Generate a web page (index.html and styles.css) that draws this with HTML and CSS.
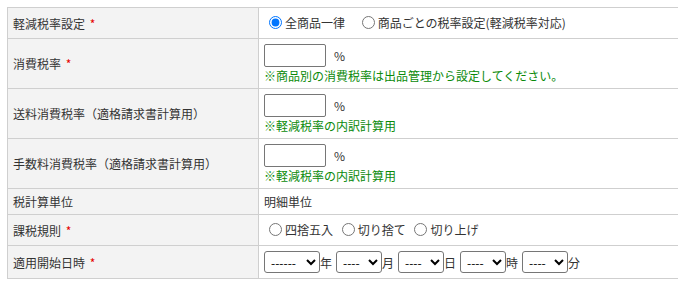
FILE: index.html
```html
<!doctype html>
<html lang="ja">
<head>
  <meta charset="UTF-8">
  <meta name="viewport" content="width=device-width, initial-scale=1.0">
  <title>税率設定</title>
  <link rel="stylesheet" href="styles.css">
</head>
<body>
  <div class="wrap">
    <table class="form-table">
      <tr class="row-short">
        <th>軽減税率設定 <span class="req">*</span></th>
        <td>
          <label class="opt opt-wide"><input type="radio" name="mode" checked>全商品一律</label>
          <label class="opt"><input type="radio" name="mode">商品ごとの税率設定(軽減税率対応)</label>
        </td>
      </tr>
      <tr class="row-rate">
        <th>消費税率 <span class="req">*</span></th>
        <td>
          <div><input type="text" class="num"><span class="unit">%</span></div>
          <div class="note">※商品別の消費税率は出品管理から設定してください。</div>
        </td>
      </tr>
      <tr class="row-rate">
        <th>送料消費税率（適格請求書計算用）</th>
        <td>
          <div><input type="text" class="num"><span class="unit">%</span></div>
          <div class="note">※軽減税率の内訳計算用</div>
        </td>
      </tr>
      <tr class="row-rate">
        <th>手数料消費税率（適格請求書計算用）</th>
        <td>
          <div><input type="text" class="num"><span class="unit">%</span></div>
          <div class="note">※軽減税率の内訳計算用</div>
        </td>
      </tr>
      <tr class="row-text">
        <th>税計算単位</th>
        <td>明細単位</td>
      </tr>
      <tr class="row-short">
        <th>課税規則 <span class="req">*</span></th>
        <td>
          <label class="opt"><input type="radio" name="round">四捨五入</label>
          <label class="opt"><input type="radio" name="round">切り捨て</label>
          <label class="opt"><input type="radio" name="round">切り上げ</label>
        </td>
      </tr>
      <tr class="row-date">
        <th>適用開始日時 <span class="req">*</span></th>
        <td>
          <div class="date">
            <select class="sel-year"><option>------</option></select><span>年</span>
            <select class="sel"><option>----</option></select><span>月</span>
            <select class="sel"><option>----</option></select><span>日</span>
            <select class="sel"><option>----</option></select><span>時</span>
            <select class="sel"><option>----</option></select><span>分</span>
          </div>
        </td>
      </tr>
    </table>
  </div>
</body>
</html>
```

FILE: styles.css
```css
body {
  margin: 0;
  font-family: "Noto Sans CJK JP", "Noto Sans", sans-serif;
  font-size: 12px;
  line-height: 17px;
  color: #333;
  background: #fff;
}
.wrap {
  padding: 7px 0 0 7px;
}
.form-table {
  border-collapse: collapse;
  table-layout: fixed;
  width: 100%;
}
.form-table th,
.form-table td {
  border: 1px solid #cfcfcf;
  padding: 0 5px;
  text-align: left;
  vertical-align: middle;
  font-weight: normal;
}
.form-table td {
  border-right: none;
}
.form-table th {
  width: 240px;
  background: #f3f3f3;
}
.req {
  color: #e60000;
  margin-left: 2px;
}
.row-short th,
.row-short td {
  height: 30px;
}
.row-rate th,
.row-rate td {
  height: 49px;
}
.row-text th,
.row-text td {
  height: 25px;
}
.row-date th,
.row-date td {
  height: 32px;
}
.opt {
  display: inline-flex;
  align-items: center;
  margin-right: 1px;
}
.opt input {
  width: 13px;
  height: 13px;
  margin: 0 3px 0 5px;
}
.opt-wide {
  margin-right: 9px;
}
.num {
  width: 62px;
  height: 23px;
  box-sizing: border-box;
  border: 1px solid #767676;
  border-radius: 2px;
  padding: 1px 2px;
  margin: 0;
  vertical-align: top;
}
.unit {
  display: inline-block;
  margin-left: 8px;
  line-height: 23px;
}
.note {
  color: #0a8a0a;
}
.date {
  display: flex;
  align-items: center;
}
.date select {
  height: 22px;
  box-sizing: border-box;
  border: 1px solid #767676;
  border-radius: 3px;
  font-size: 12px;
  font-family: inherit;
  color: #000;
  background: #fff;
  padding: 0 0 0 2px;
  margin: 0;
}
.sel-year {
  width: 56px;
}
.sel {
  width: 46px;
}
.date span {
  margin-right: 4px;
}
```
